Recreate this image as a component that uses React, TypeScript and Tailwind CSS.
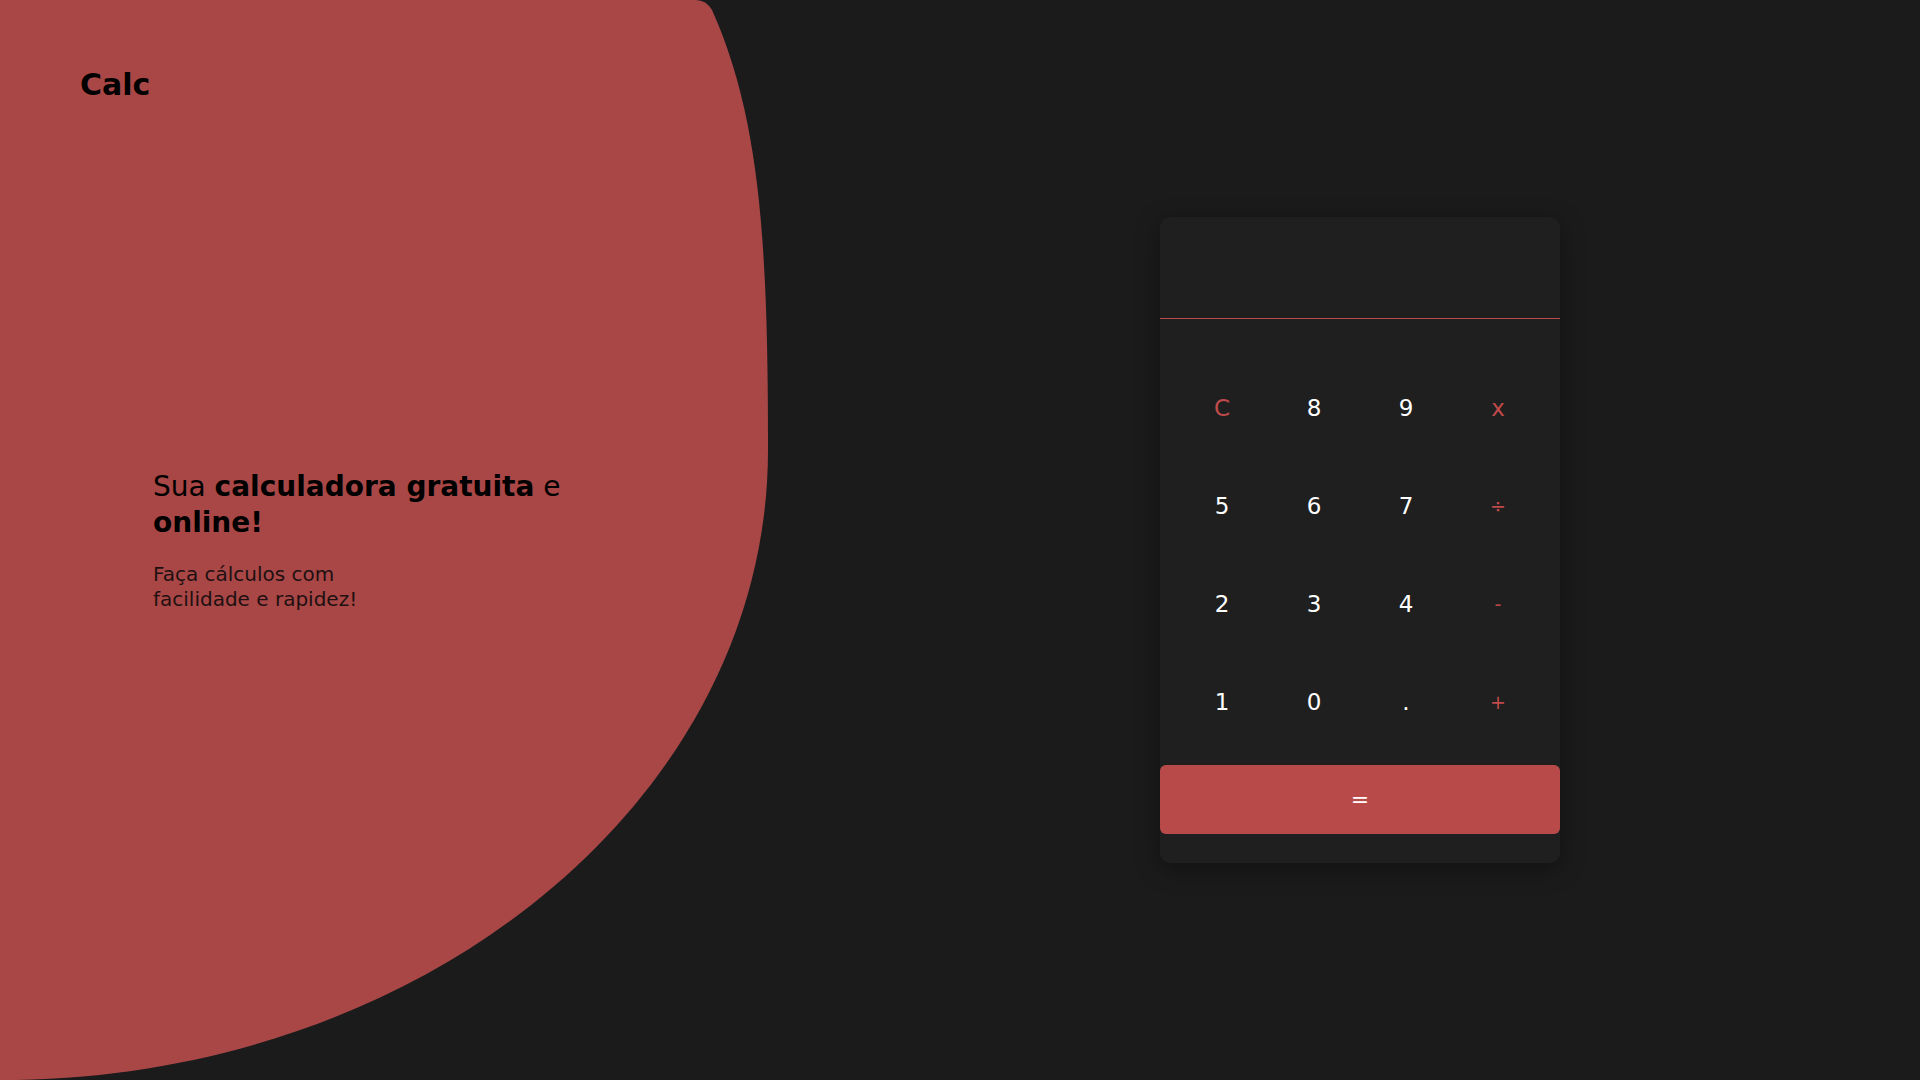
import React from "react";

const keys: { label: string; red?: boolean; small?: boolean }[] = [
  { label: "C", red: true },
  { label: "8" },
  { label: "9" },
  { label: "x", red: true },
  { label: "5" },
  { label: "6" },
  { label: "7" },
  { label: "÷", red: true, small: true },
  { label: "2" },
  { label: "3" },
  { label: "4" },
  { label: "-", red: true, small: true },
  { label: "1" },
  { label: "0" },
  { label: "." },
  { label: "+", red: true, small: true },
];

const BLOB =
  "M0,0 L696,0 Q706,0 712,10 C761,119 768,250 768,450 C768,798 424,1080 0,1080 Z";

export default function App() {
  return (
    <div
      className="relative h-[1080px] w-full overflow-hidden bg-[#1b1b1b]"
      style={{ fontFamily: "'DejaVu Sans', sans-serif" }}
    >
      <svg
        className="absolute left-0 top-0"
        width="1920"
        height="1080"
        viewBox="0 0 1920 1080"
      >
        <path d={BLOB} fill="#a94747" />
      </svg>

      <div className="relative flex h-full">
        <div className="flex w-[960px] flex-col pl-[80px] pt-[65px]">
          <div className="text-[30px] font-bold leading-[40px] text-black">Calc</div>
          <div className="ml-[73px] mt-[364px]">
            <h1 className="text-[28px] font-normal leading-[36px] text-black">
              Sua <span className="font-bold">calculadora gratuita</span> e
              <br />
              <span className="font-bold">online!</span>
            </h1>
            <p className="mt-[21px] text-[20px] leading-[25px] text-[#1e1010]">
              Faça cálculos com
              <br />
              facilidade e rapidez!
            </p>
          </div>
        </div>

        <div className="flex flex-1 items-center pl-[200px]">
          <div className="w-[400px] overflow-hidden rounded-[10px] bg-[#1f1f1f] shadow-[0_6px_24px_rgba(0,0,0,0.35)]">
            <div className="h-[102px] border-b border-[#b94a4a]" />
            <div className="grid grid-cols-4 px-4 pt-[40px]">
              {keys.map((k) => (
                <button
                  key={k.label}
                  className={`flex h-[98px] items-center justify-center ${
                    k.red ? "text-[#c04a4a]" : "text-white"
                  } ${k.small ? "text-[19px]" : "text-[23px]"}`}
                >
                  {k.label}
                </button>
              ))}
            </div>
            <button className="mt-[14px] flex h-[69px] w-full items-center justify-center rounded-[6px] bg-[#b94a4a] text-[22px] text-white">
              =
            </button>
            <div className="h-[29px]" />
          </div>
        </div>
      </div>
    </div>
  );
}
